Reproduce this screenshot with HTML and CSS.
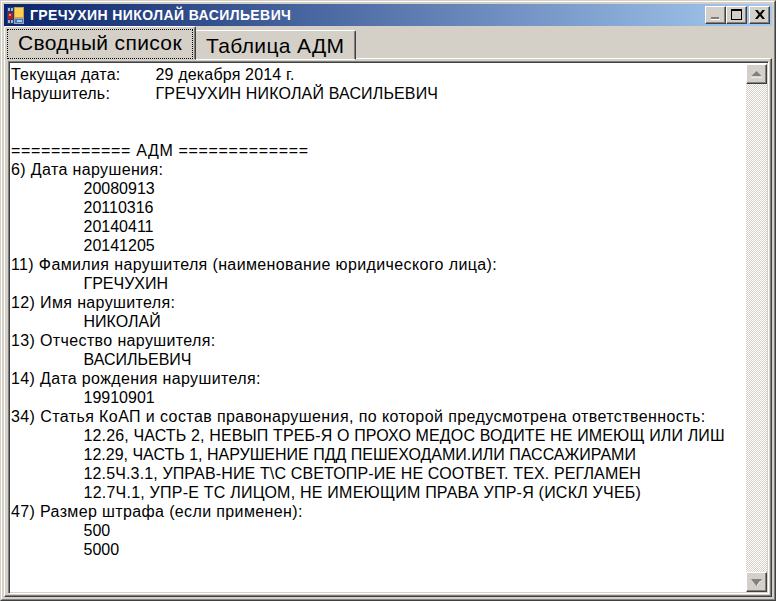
FILE: index.html
```html
<!DOCTYPE html>
<html lang="ru">
<head>
<meta charset="utf-8">
<title>ГРЕЧУХИН НИКОЛАЙ ВАСИЛЬЕВИЧ</title>
<link rel="stylesheet" href="styles.css">
</head>
<body>
<div class="window">
  <div class="frame">
    <header class="titlebar">
      <svg class="app-icon" width="17" height="17" viewBox="0 0 17 17">
        <rect width="17" height="17" fill="#a8a49c"/>
        <rect x="0" y="0" width="7" height="17" fill="#1f3c78"/>
        <rect x="1" y="1" width="2" height="3" fill="#a8b4d0"/>
        <rect x="4" y="1" width="2" height="3" fill="#a8b4d0"/>
        <rect x="1" y="6" width="5" height="6" fill="#c01818"/>
        <rect x="2" y="7" width="2" height="2" fill="#f08080"/>
        <rect x="1" y="13" width="2" height="3" fill="#a8b4d0"/>
        <rect x="4" y="13" width="2" height="3" fill="#a8b4d0"/>
        <rect x="7" y="0" width="10" height="11" fill="#c8a048"/>
        <rect x="8" y="1" width="8" height="9" fill="#ffd050"/>
        <rect x="8" y="12" width="8" height="4" fill="#3a78d8"/>
        <rect x="10" y="13" width="5" height="2" fill="#a8ccf4"/>
      </svg>
      <span class="title-text">ГРЕЧУХИН НИКОЛАЙ ВАСИЛЬЕВИЧ</span>
      <div class="caption-buttons">
        <button class="cap-btn" aria-label="Свернуть">
          <svg width="16" height="14" viewBox="0 0 16 14"><rect x="3" y="9" width="8" height="2" fill="#808080"/><rect x="3" y="11" width="9" height="1" fill="#fff"/></svg>
        </button>
        <button class="cap-btn" aria-label="Развернуть">
          <svg width="16" height="14" viewBox="0 0 16 14"><path d="M2 1h11v11H2z M3 3v8h9V3z" fill="#000" fill-rule="evenodd"/></svg>
        </button>
        <button class="cap-btn cap-close" aria-label="Закрыть">
          <svg width="16" height="14" viewBox="0 0 16 14"><path d="M3 2h2.500L8 5l2.500-3H13L9.500 6.500 13 11h-2.500L8 8l-2.500 3H3l3.500-4.500z" fill="#000"/></svg>
        </button>
      </div>
    </header>
    <nav class="tabs">
      <div class="tab tab-active"><span class="focus-box">Сводный список</span></div>
      <div class="tab tab-idle">Таблица АДМ</div>
    </nav>
    <section class="pane">
      <div class="textbox">
        <div class="content">
          <div class="line"><span class="label">Текущая дата:</span><span class="sp-date">29 декабря 2014 г.</span></div>
          <div class="line"><span class="label">Нарушитель:</span><span class="sp-name">ГРЕЧУХИН НИКОЛАЙ ВАСИЛЬЕВИЧ</span></div>
          <div class="line">&nbsp;</div>
          <div class="line">&nbsp;</div>
          <div class="line sp-eq">============ АДМ =============</div>
          <div class="line lc">6) Дата нарушения:</div>
          <div class="line ind">20080913</div>
          <div class="line ind">20110316</div>
          <div class="line ind">20140411</div>
          <div class="line ind">20141205</div>
          <div class="line lc">11) Фамилия нарушителя (наименование юридического лица):</div>
          <div class="line ind">ГРЕЧУХИН</div>
          <div class="line lc">12) Имя нарушителя:</div>
          <div class="line ind">НИКОЛАЙ</div>
          <div class="line lc">13) Отчество нарушителя:</div>
          <div class="line ind">ВАСИЛЬЕВИЧ</div>
          <div class="line lc">14) Дата рождения нарушителя:</div>
          <div class="line ind">19910901</div>
          <div class="line lc-wide">34) Статья КоАП и состав правонарушения, по которой предусмотрена ответственность:</div>
          <div class="line ind sp-cap">12.26, ЧАСТЬ 2, НЕВЫП ТРЕБ-Я О ПРОХО МЕДОС ВОДИТЕ НЕ ИМЕЮЩ ИЛИ ЛИШ</div>
          <div class="line ind">12.29, ЧАСТЬ 1, НАРУШЕНИЕ ПДД ПЕШЕХОДАМИ.ИЛИ ПАССАЖИРАМИ</div>
          <div class="line ind sp-cap">12.5Ч.3.1, УПРАВ-НИЕ Т\С СВЕТОПР-ИЕ НЕ СООТВЕТ. ТЕХ. РЕГЛАМЕН</div>
          <div class="line ind sp-cap2">12.7Ч.1, УПР-Е ТС ЛИЦОМ, НЕ ИМЕЮЩИМ ПРАВА УПР-Я (ИСКЛ УЧЕБ)</div>
          <div class="line lc">47) Размер штрафа (если применен):</div>
          <div class="line ind">500</div>
          <div class="line ind">5000</div>
        </div>
        <div class="scrollbar">
          <div class="scroll-btn">
            <svg width="11" height="7" viewBox="0 0 11 7"><path d="M5.500 0L11 5.500H0z" fill="#808080"/><rect y="5.500" width="11" height="1" fill="#fff"/></svg>
          </div>
          <div class="scroll-track"></div>
          <div class="scroll-btn">
            <svg width="11" height="7" viewBox="0 0 11 7"><path d="M0 0h11L5.500 7z" fill="#808080"/><path d="M6 6l3-4h1L6 7z" fill="#fff"/></svg>
          </div>
        </div>
      </div>
    </section>
  </div>
</div>
</body>
</html>
```
FILE: styles.css
```css
* { box-sizing: border-box; }
html, body { margin: 0; padding: 0; }
body { width: 776px; height: 601px; overflow: hidden; background: #d4d0c8; font-family: "Liberation Sans", Arial, sans-serif; color: #000; }

.window {
  width: 776px; height: 601px;
  border: 1px solid; border-color: #d4d0c8 #404040 #404040 #d4d0c8;
}
.frame {
  height: 100%;
  display: flex; flex-direction: column;
  background: #d4d0c8;
  border: 1px solid; border-color: #fff #808080 #808080 #fff;
  padding: 2px;
}

.titlebar {
  height: 22px; flex: none;
  display: flex; align-items: center;
  padding: 0 2px 0 4px;
  background: linear-gradient(90deg, #0a246a, #a6caf0);
}
.app-icon { flex: none; margin-right: 6px; margin-left: -1px; }
.title-text { color: #fff; font-weight: 700; font-size: 14px; letter-spacing: .41px; white-space: nowrap; }
.caption-buttons { margin-left: auto; display: flex; }
.cap-btn {
  width: 21px; height: 18px; padding: 0;
  display: flex; align-items: center; justify-content: center;
  background: #d4d0c8;
  border: 1px solid; border-color: #fff #404040 #404040 #fff;
  box-shadow: inset -1px -1px 0 #808080;
}
.cap-close { margin-left: 2px; }

.tabs { flex: none; display: flex; align-items: flex-end; height: 34px; position: relative; z-index: 1; margin-bottom: -2px; }
.tab {
  background: #d4d0c8;
  border: 1px solid; border-color: #fff #404040 transparent #fff;
  border-radius: 2px 2px 0 0;
  box-shadow: inset -1px 0 0 #808080;
  font-size: 21px;
  letter-spacing: .35px;
  white-space: nowrap;
}
.tab-active { width: 192px; height: 34px; padding: 2px; position: relative; z-index: 2; }
.focus-box { display: block; height: 30px; line-height: 26px; padding-left: 10px; border: 1px dotted #000; }
.tab-idle { width: 161px; height: 30px; line-height: 29px; padding-left: 10px; margin-left: -1px; border-bottom-color: #fff; }

.pane {
  flex: 1; min-height: 0;
  border: 1px solid; border-color: #fff #404040 #404040 #fff;
  box-shadow: inset -1px -1px 0 #808080;
  padding: 2px 2px 2px 3px;
}
.textbox {
  height: 100%;
  display: flex;
  background: #fff;
  border: 1px solid; border-color: #808080 #fff #fff #808080;
  box-shadow: inset 1px 1px 0 #404040, inset -1px -1px 0 #d4d0c8;
}
.content {
  flex: 1; min-width: 0;
  padding: 3px 0 0 2px;
  font-size: 16px; line-height: 19px;
}
.line { white-space: nowrap; height: 19px; }
.ind { padding-left: 72.500px; }
.label { display: inline-block; width: 144.500px; letter-spacing: .23px; }
.lc { letter-spacing: .37px; }
.lc-wide { letter-spacing: .41px; }
.sp-date { letter-spacing: .17px; }
.sp-name { letter-spacing: .15px; }
.sp-eq { letter-spacing: .66px; }
.sp-cap { letter-spacing: .14px; }
.sp-cap2 { letter-spacing: .23px; }

.scrollbar { flex: none; width: 21px; margin: 2px 1px 1px 0; display: flex; flex-direction: column; }
.scroll-btn {
  flex: none; height: 20px;
  display: flex; align-items: center; justify-content: center;
  background: #d4d0c8;
  border: 1px solid; border-color: #fff #404040 #404040 #fff;
  box-shadow: inset -1px -1px 0 #808080;
}
.scroll-track {
  flex: 1;
  background-color: #fff;
  background-image: conic-gradient(#d4d0c8 25%, #fff 0 50%, #d4d0c8 0 75%, #fff 0);
  background-size: 2px 2px;
}
```
